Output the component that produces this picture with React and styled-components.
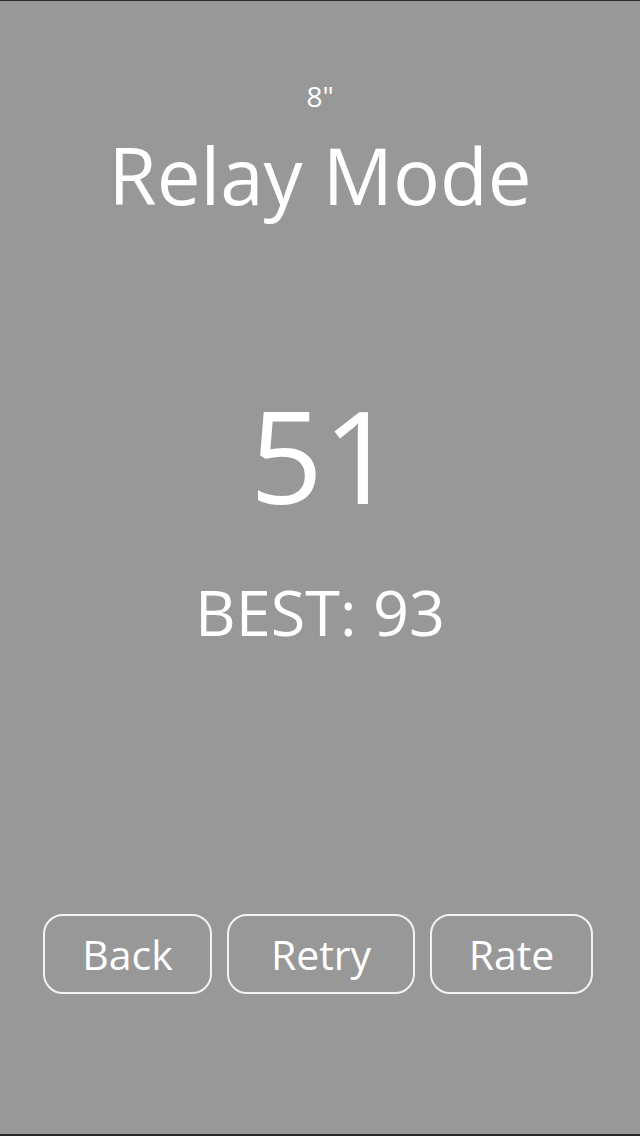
import React from 'react';
import styled, { createGlobalStyle } from 'styled-components';

const GlobalStyle = createGlobalStyle`
  html, body {
    margin: 0;
    padding: 0;
    background: #989898;
  }
  * { box-sizing: border-box; }
`;

const Screen = styled.div`
  width: 640px;
  height: 1136px;
  background: #989898;
  border-top: 1px solid #2a2a2a;
  border-bottom: 2px solid #2a2a2a;
  display: flex;
  flex-direction: column;
  align-items: center;
  font-family: "Open Sans", "Noto Sans", sans-serif;
  color: #ffffff;
`;

const Timer = styled.div`
  margin-top: 81px;
  font-size: 28px;
  line-height: 1;
`;

const Title = styled.h1`
  margin: 26px 0 0;
  font-weight: 400;
  font-size: 78px;
  line-height: 1;
`;

const Score = styled.div`
  margin-top: 177px;
  font-size: 128px;
  line-height: 1;
  padding-left: 6px;
`;

const Best = styled.div`
  margin-top: 61px;
  font-size: 63px;
  line-height: 1;
`;

const ButtonRow = styled.div`
  margin-top: auto;
  margin-bottom: 140px;
  display: flex;
  gap: 15px;
  padding-right: 4px;
`;

const Button = styled.button`
  width: ${(p) => p.$w}px;
  height: 80px;
  border: 2px solid #f2f2f2;
  border-radius: 20px;
  background: transparent;
  color: #ffffff;
  font-family: inherit;
  font-size: 41px;
  padding: 0;
  cursor: pointer;
`;

const App = () => {
  return (
    <>
      <GlobalStyle />
      <Screen>
        <Timer>8"</Timer>
        <Title>Relay Mode</Title>
        <Score>51</Score>
        <Best>BEST: 93</Best>
        <ButtonRow>
          <Button $w={169}>Back</Button>
          <Button $w={188}>Retry</Button>
          <Button $w={163}>Rate</Button>
        </ButtonRow>
      </Screen>
    </>
  );
};

export default App;
